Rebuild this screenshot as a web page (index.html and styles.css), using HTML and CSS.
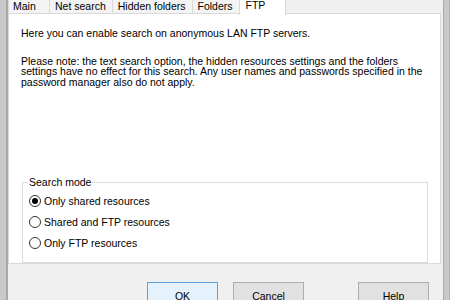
FILE: index.html
```html
<!DOCTYPE html>
<html lang="en">
<head>
    <meta charset="UTF-8">
    <title>Search options - FTP</title>
    <link rel="stylesheet" href="styles.css">
</head>
<body>
    <div class="edge-left"></div>
    <div class="dialog">
        <div class="tabs">
            <div class="tab">Main</div>
            <div class="tab">Net search</div>
            <div class="tab">Hidden folders</div>
            <div class="tab">Folders</div>
            <div class="tab active">FTP</div>
            <div class="tab-fill"></div>
        </div>
        <div class="panel">
            <p class="intro">Here you can enable search on anonymous LAN FTP servers.</p>
            <p class="note">Please note: the text search option, the hidden resources settings and the folders settings have no effect for this search. Any user names and passwords specified in the password manager also do not apply.</p>

            <fieldset class="group">
                <legend>Search mode</legend>
                <label class="radio">
                    <input type="radio" name="mode" checked>
                    <span class="dot"></span>
                    Only shared resources
                </label>
                <label class="radio">
                    <input type="radio" name="mode">
                    <span class="dot"></span>
                    Shared and FTP resources
                </label>
                <label class="radio">
                    <input type="radio" name="mode">
                    <span class="dot"></span>
                    Only FTP resources
                </label>
            </fieldset>
        </div>
        <div class="buttons">
            <button class="default">OK</button>
            <button class="cancel">Cancel</button>
            <button class="help">Help</button>
        </div>
    </div>
    <div class="edge-right"></div>
</body>
</html>
```

FILE: styles.css
```css
body {
    font-family: 'Liberation Sans', Arial, sans-serif;
    font-size: 10.5px;
    color: #000;
    margin: 0;
    padding: 0;
    height: 300px;
    display: flex;
    overflow: hidden;
    background-color: #f0f0f0;
}

.edge-left {
    width: 6px;
    background-color: #c9c9c9;
    border-right: 2px solid #a9a9a9;
}

.edge-right {
    width: 5px;
    margin-left: 2px;
    background-color: #c9c9c9;
    border-left: 1px solid #a9a9a9;
    border-right: 1px solid #b4b4b4;
}

.dialog {
    flex: 1;
    display: flex;
    flex-direction: column;
}

/* Tabs */
.tabs {
    display: flex;
    height: 14px;
}

.tab {
    box-sizing: border-box;
    min-width: 42px;
    padding: 0 6px 0 5px;
    line-height: 12px;
    background-color: #f3f3f3;
    border: 1px solid #d9d9d9;
    border-top: none;
    margin-left: -1px;
}

.tab:first-child {
    margin-left: 0;
    padding-left: 4px;
}

.tab.active {
    background-color: #fff;
    padding: 0 20px 0 6px;
    line-height: 10px;
    position: relative;
    z-index: 1;
    height: 15px;
    border-bottom: none;
}

.tab-fill {
    flex: 1;
    border-bottom: 1px solid #d9d9d9;
}

/* Panel */
.panel {
    height: 256px;
    box-sizing: border-box;
    background-color: #fff;
    border: 1px solid #d9d9d9;
    border-top: none;
    padding: 14px 12px 0 12px;
}

.panel p {
    margin: 0;
    line-height: 10.5px;
}

.intro {
    margin-bottom: 17px !important;
}

.note {
    margin-bottom: 90px !important;
}

.group {
    margin: 0 0 0 1px;
    padding: 2px 0 9px 6px;
    border: 1px solid #dcdcdc;
}

.group legend {
    padding: 0 1px;
    margin-left: -1px;
    line-height: 11px;
}

.radio {
    display: flex;
    align-items: center;
    height: 21px;
}

.radio input {
    display: none;
}

.dot {
    width: 10px;
    height: 10px;
    border: 1px solid #333;
    border-radius: 50%;
    margin-right: 3px;
    display: flex;
    align-items: center;
    justify-content: center;
}

.radio input:checked + .dot:before {
    content: "";
    width: 6px;
    height: 6px;
    border-radius: 50%;
    background-color: #000;
}

/* Buttons */
.buttons {
    display: flex;
    justify-content: flex-end;
    padding: 18px 12px 0 0;
}

.buttons button {
    width: 71px;
    height: 27px;
    font-family: inherit;
    font-size: 10.5px;
    background-color: #e1e1e1;
    border: 1px solid #adadad;
    padding: 0;
}

.buttons button.default {
    border-color: #5aa0dc;
    background-color: #e5f1fb;
}

.buttons .cancel {
    margin-left: 15px;
}

.buttons .help {
    margin-left: 54px;
}
```
